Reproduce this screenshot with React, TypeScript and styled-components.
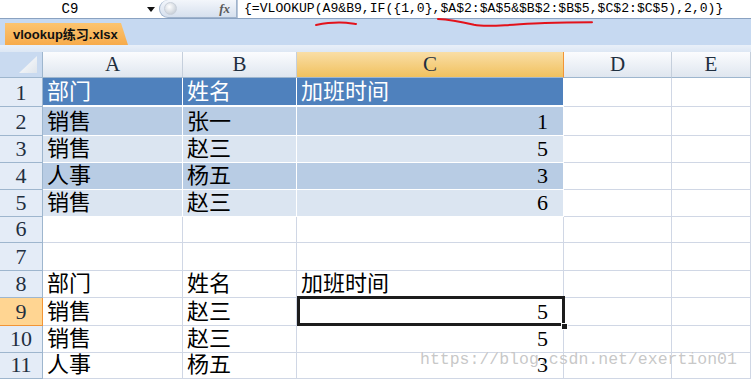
import styled, { createGlobalStyle, css } from "styled-components";

const GlobalStyle = createGlobalStyle`
  html, body {
    margin: 0;
    padding: 0;
    background: #ffffff;
  }
  body {
    width: 751px;
    height: 380px;
    overflow: hidden;
  }
`;

type Tone = "head" | "dark" | "light" | "none";

const COLUMNS = [
  { key: "A", width: 140 },
  { key: "B", width: 114 },
  { key: "C", width: 267 },
  { key: "D", width: 108 },
  { key: "E", width: 79 },
];

const ROW_HEIGHTS = [29, 29, 27, 27, 27, 26, 28, 27, 28, 27, 26];

const ROWS: { cells: string[]; tone: Tone }[] = [
  { cells: ["部门", "姓名", "加班时间"], tone: "head" },
  { cells: ["销售", "张一", "1"], tone: "dark" },
  { cells: ["销售", "赵三", "5"], tone: "light" },
  { cells: ["人事", "杨五", "3"], tone: "dark" },
  { cells: ["销售", "赵三", "6"], tone: "light" },
  { cells: ["", "", ""], tone: "none" },
  { cells: ["", "", ""], tone: "none" },
  { cells: ["部门", "姓名", "加班时间"], tone: "none" },
  { cells: ["销售", "赵三", "5"], tone: "none" },
  { cells: ["销售", "赵三", "5"], tone: "none" },
  { cells: ["人事", "杨五", "3"], tone: "none" },
];

const SELECTED = { row: 9, col: "C" };

const FORMULA = "{=VLOOKUP(A9&B9,IF({1,0},$A$2:$A$5&$B$2:$B$5,$C$2:$C$5),2,0)}";

const toneBg: Record<Tone, string> = {
  head: "#4f81bd",
  dark: "#b8cce4",
  light: "#dbe5f1",
  none: "#ffffff",
};

const App = () => {
  return (
    <Page>
      <GlobalStyle />

      <FormulaBar>
        <NameBox>C9</NameBox>
        <DropArrow />
        <FxBox>
          <Knob />
          <FxLabel>fx</FxLabel>
        </FxBox>
        <FormulaText>{FORMULA}</FormulaText>
      </FormulaBar>

      <TabStrip>
        <SheetTab>vlookup练习.xlsx</SheetTab>
      </TabStrip>
      <PaleStrip />

      <Grid $rows={ROW_HEIGHTS}>
        <Corner />
        {COLUMNS.map((c) => (
          <ColHeader key={c.key} $active={c.key === SELECTED.col}>
            {c.key}
          </ColHeader>
        ))}

        {ROWS.map((row, i) => {
          const n = i + 1;
          return [
            <RowHeader key={`h${n}`} $active={n === SELECTED.row}>
              {n}
            </RowHeader>,
            ...COLUMNS.map((c, j) => {
              const value = row.cells[j] ?? "";
              const inTable = j < 3 ? row.tone : "none";
              return (
                <Cell
                  key={`${c.key}${n}`}
                  $tone={inTable}
                  $num={value !== "" && !isNaN(Number(value))}
                  $thick={inTable === "head"}
                  $selected={n === SELECTED.row && c.key === SELECTED.col}
                >
                  {value}
                </Cell>
              );
            }),
          ];
        })}

        <Watermark>https://blog.csdn.net/exertion01</Watermark>
      </Grid>

      <Scribble width="751" height="32" viewBox="0 0 751 32">
        <path d="M316 25 C324 23.5 332 22.5 340 22.6 C346 22.7 351 23.4 356 24" />
        <path d="M438 19 C450 19.5 462 22 474 24.8 C482 26.4 492 26 505 25.2 C520 24.4 530 23.4 545 23 C560 22.6 575 22.4 592 22.3" />
      </Scribble>
    </Page>
  );
};

export default App;

const Page = styled.div`
  position: relative;
  width: 751px;
  height: 380px;
  overflow: hidden;
  background: #ffffff;
`;

const FormulaBar = styled.div`
  display: flex;
  align-items: stretch;
  height: 18px;
  border-bottom: 1px solid #8aa2c1;
  background: #ffffff;
`;

const NameBox = styled.div`
  width: 140px;
  text-align: center;
  font: 14px/18px "Liberation Mono", monospace;
  color: #000;
`;

const DropArrow = styled.div`
  width: 19px;
  position: relative;

  &::after {
    content: "";
    position: absolute;
    left: 7px;
    top: 7px;
    border-left: 4px solid transparent;
    border-right: 4px solid transparent;
    border-top: 5px solid #111;
  }
`;

const FxBox = styled.div`
  box-sizing: border-box;
  width: 78px;
  display: flex;
  align-items: center;
  justify-content: space-between;
  padding: 0 6px 0 4px;
  border: 1px solid #9fb3cc;
  border-top: 0;
  border-radius: 10px 0 0 10px;
  background: linear-gradient(#f3f6fb, #d6e0ee);
`;

const Knob = styled.div`
  width: 11px;
  height: 11px;
  border-radius: 50%;
  background: radial-gradient(circle at 40% 35%, #ffffff, #b9c2cd);
  border: 1px solid #c9d0da;
`;

const FxLabel = styled.span`
  font: italic bold 13px/18px "Liberation Serif", serif;
  color: #5a5a5a;
`;

const FormulaText = styled.div`
  padding-left: 6px;
  border-left: 1px solid #b9c7da;
  font: 13.1px/18px "Liberation Mono", monospace;
  color: #000;
  white-space: nowrap;
`;

const TabStrip = styled.div`
  height: 26px;
  background: #c6d9f1;
  display: flex;
  align-items: flex-end;
  padding-left: 5px;
`;

const SheetTab = styled.div`
  height: 22px;
  width: 123px;
  box-sizing: border-box;
  padding-left: 8px;
  background: linear-gradient(#fcc46f, #f7ab4b);
  clip-path: polygon(0 0, 116px 0, 100% 100%, 0 100%);
  font: bold 13px/23px "Liberation Sans", "Noto Sans CJK SC", sans-serif;
  color: #111;
  white-space: nowrap;
`;

const PaleStrip = styled.div`
  height: 7px;
  background: linear-gradient(#e9f0f9, #dde7f4);
`;

const Grid = styled.div<{ $rows: number[] }>`
  position: relative;
  display: grid;
  grid-template-columns: 43px ${COLUMNS.map((c) => `${c.width}px`).join(" ")};
  grid-template-rows: 26px ${(p) => p.$rows.map((h) => `${h}px`).join(" ")};
`;

const Corner = styled.div`
  position: relative;
  box-sizing: border-box;
  background: #c9daf0;
  border-right: 1px solid #9eb6ce;
  border-bottom: 1px solid #9eb6ce;

  &::after {
    content: "";
    position: absolute;
    right: 5px;
    bottom: 4px;
    width: 18px;
    height: 17px;
    background: linear-gradient(135deg, #ffffff, #dfe5ec);
    clip-path: polygon(100% 0, 100% 100%, 0 100%);
  }
`;

const headerFont = css`
  font: 21px/22px "Liberation Serif", serif;
  color: #1f2f3f;
`;

const ColHeader = styled.div<{ $active?: boolean }>`
  box-sizing: border-box;
  display: flex;
  align-items: flex-end;
  justify-content: center;
  padding-bottom: 2px;
  ${headerFont}
  border-bottom: 1px solid #9eb6ce;
  border-right: 1px solid ${(p) => (p.$active ? "#f29536" : "#c5cfdc")};
  background: ${(p) =>
    p.$active
      ? "linear-gradient(#f9dea6, #f1c15e)"
      : "linear-gradient(#fbfcfe, #dfe6ef)"};
`;

const RowHeader = styled.div<{ $active?: boolean }>`
  box-sizing: border-box;
  display: flex;
  align-items: flex-end;
  justify-content: center;
  padding-bottom: 2px;
  ${headerFont}
  font-size: 22px;
  background: ${(p) => (p.$active ? "#ffd592" : "#e4ecf7")};
  border-right: 1px solid ${(p) => (p.$active ? "#f29536" : "#9eb6ce")};
  border-bottom: 1px solid ${(p) => (p.$active ? "#f29536" : "#9eb6ce")};
`;

const Cell = styled.div<{
  $tone: Tone;
  $num?: boolean;
  $thick?: boolean;
  $selected?: boolean;
}>`
  position: relative;
  box-sizing: border-box;
  display: flex;
  align-items: flex-end;
  justify-content: ${(p) => (p.$num ? "flex-end" : "flex-start")};
  padding: ${(p) => (p.$num ? "0 15px 2px 0" : "0 0 2px 4px")};
  background: ${(p) => toneBg[p.$tone]};
  color: ${(p) => (p.$tone === "head" ? "#ffffff" : "#000000")};
  font: 22px/22px "Liberation Serif", "Noto Sans CJK SC", serif;
  white-space: nowrap;
  border-right: 1px solid ${(p) => (p.$tone === "none" ? "#d0d7e5" : "#ffffff")};
  border-bottom: ${(p) => (p.$thick ? 2 : 1)}px solid
    ${(p) => (p.$tone === "none" ? "#d0d7e5" : "#ffffff")};

  ${(p) =>
    p.$selected &&
    css`
      z-index: 2;

      &::after {
        content: "";
        position: absolute;
        top: -2px;
        left: 0;
        right: -2px;
        bottom: -1px;
        border: 3px solid #1c1c1c;
      }

      &::before {
        content: "";
        position: absolute;
        right: -5px;
        bottom: -5px;
        width: 5px;
        height: 5px;
        background: #1c1c1c;
        border: 1px solid #ffffff;
        z-index: 3;
      }
    `}
`;

// the blog watermark baked into the screenshot
const Watermark = styled.div`
  position: absolute;
  left: 420px;
  top: 298px;
  font: 16.5px/20px "Liberation Mono", monospace;
  color: rgba(185, 185, 185, 0.8);
  text-shadow: 0 0 1px #ffffff;
  pointer-events: none;
  z-index: 4;
  white-space: nowrap;
`;

const Scribble = styled.svg`
  position: absolute;
  left: 0;
  top: 0;
  pointer-events: none;

  path {
    fill: none;
    stroke: #e3121b;
    stroke-width: 2;
    stroke-linecap: round;
  }
`;
